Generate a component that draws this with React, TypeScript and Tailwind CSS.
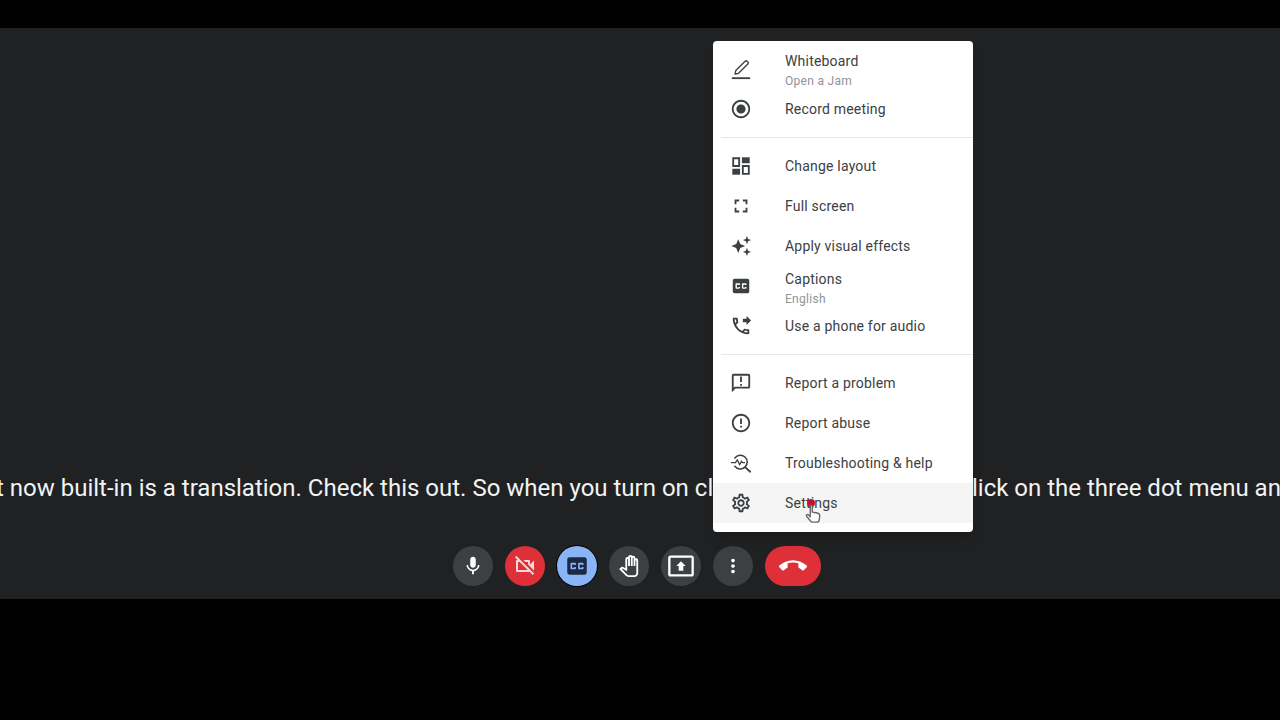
import React from "react";
import {
  MdRadioButtonChecked,
  MdFullscreen,
  MdClosedCaption,
  MdOutlinePhoneForwarded,
  MdOutlineAnnouncement,
  MdErrorOutline,
  MdOutlineSettings,
  MdMic,
  MdOutlineVideocamOff,
  MdOutlinePanTool,
  MdOutlinePresentToAll,
  MdMoreVert,
  MdCallEnd,
} from "react-icons/md";

function PencilIcon({ className }: any) {
  return (
    <svg viewBox="0 0 24 24" className={className} fill="none" stroke="currentColor" strokeWidth="1.5" strokeLinejoin="round">
      <path d="M5.5 17.500l.8-3.800L16.500 3.500c.6-.6 1.500-.6 2.100 0l.9.900c.6.600.6 1.500 0 2.100L9.300 16.700z" />
      <path d="M2 22h20" strokeWidth="2" />
    </svg>
  );
}

function LayoutIcon({ className }: any) {
  return (
    <svg viewBox="0 0 24 24" className={className} fill="currentColor">
      <path d="M2.500 2.500h8.500v10.500H2.500V2.500zm2 2V11H9V4.500H4.500z" />
      <path d="M13 2.500h8.500V9H13z" />
      <path d="M2.500 15H11v6.500H2.500z" />
      <path d="M13 11h8.500v10.500H13V11zm2 2v6.500h4.500V13H15z" />
    </svg>
  );
}

function SparkleIcon({ className }: any) {
  return (
    <svg viewBox="0 0 24 24" className={className} fill="currentColor">
      <path d="M9 4.500l2.200 5.300 5.300 2.200-5.300 2.200L9 19.500l-2.200-5.300L1.500 12l5.300-2.200z" />
      <path d="M18.500 1l1.200 3.300L23 5.500l-3.300 1.200L18.500 10l-1.200-3.300L14 5.500l3.300-1.200z" />
      <path d="M18.500 14l1.200 3.300L23 18.500l-3.300 1.200L18.500 23l-1.200-3.300L14 18.500l3.300-1.200z" />
    </svg>
  );
}

function TroubleshootIcon({ className }: any) {
  return (
    <svg viewBox="0 0 24 24" className={className} fill="none" stroke="currentColor" strokeWidth="1.700" strokeLinecap="round" strokeLinejoin="round">
      <path d="M5.300 6.500A7.500 7.500 0 1 1 5.300 15.500" />
      <path d="M16.500 16.500L22 21.500" strokeWidth="2" />
      <path d="M1.500 11.500H6l2-3 2.500 5.500 2-4 1 1.500h2.500" strokeWidth="1.400" />
    </svg>
  );
}

function MenuItem({ icon: Icon, label, sub, active, subTop }: any) {
  return (
    <div className={`h-10 flex ${sub ? "items-start" : "items-center"} ${active ? "bg-[#f5f5f5]" : ""}`}>
      <div className="w-14 mr-4 h-10 flex items-center justify-center shrink-0">
        <Icon className="w-[22px] h-[22px] text-[#3c4043]" />
      </div>
      <div className={sub ? subTop : ""}>
        <div className="text-[14px] leading-5 tracking-[0.2px] text-[#3c4043]">{label}</div>
        {sub && <div className="text-[12px] leading-[21px] tracking-[0.3px] text-[#8f9398]">{sub}</div>}
      </div>
    </div>
  );
}

function Divider() {
  return <div className="my-2 ml-2 h-px bg-[#e8e8e8]" />;
}

function ToolButton({ icon: Icon, bg, color, wide, size }: any) {
  return (
    <div className={`h-10 ${wide ? "w-14" : "w-10"} rounded-full flex items-center justify-center ${bg}`}>
      <Icon className={`${size || "w-[22px] h-[22px]"} ${color}`} />
    </div>
  );
}

export default function App() {
  return (
    <div className="h-[720px] w-[1280px] bg-black overflow-hidden flex flex-col font-['Roboto',sans-serif]">
      <div className="h-7 shrink-0" />

      <div className="relative h-[571px] shrink-0 bg-[#1f2123] overflow-hidden flex flex-col justify-end">
        {/* caption line runs past both edges of the window */}
        <div className="whitespace-nowrap text-[24px] leading-8 text-[#f1f3f4] mb-[42px] -ml-[4px]">
          t now built-in is a translation. Check this out. So when you turn on closed captions and you click on the three dot menu and
        </div>

        <div className="flex justify-center gap-3 mb-[13px] pr-[6px]">
          <ToolButton icon={MdMic} bg="bg-[#3c4043]" color="text-white" />
          <ToolButton icon={MdOutlineVideocamOff} bg="bg-[#de3038]" color="text-[#fbd5d7]" size="w-6 h-6" />
          <div className="w-10 h-10 rounded-full bg-[#8ab4f8] flex items-center justify-center ring-1 ring-black">
            <MdClosedCaption className="w-[26px] h-[26px] text-[#1b2a44]" />
          </div>
          <ToolButton icon={MdOutlinePanTool} bg="bg-[#3c4043]" color="text-white" />
          <ToolButton icon={MdOutlinePresentToAll} bg="bg-[#3c4043]" color="text-white" size="w-7 h-7" />
          <ToolButton icon={MdMoreVert} bg="bg-[#3c4043]" color="text-white" />
          <ToolButton icon={MdCallEnd} bg="bg-[#de3038]" color="text-white" wide size="w-7 h-7" />
        </div>

        <div className="absolute left-[713px] top-[13px] w-[260px] h-[491px] bg-white rounded pt-2 shadow-lg">
          <MenuItem icon={PencilIcon} label="Whiteboard" sub="Open a Jam" subTop="pt-[2px]" />
          <MenuItem icon={MdRadioButtonChecked} label="Record meeting" />
          <Divider />
          <MenuItem icon={LayoutIcon} label="Change layout" />
          <MenuItem icon={MdFullscreen} label="Full screen" />
          <MenuItem icon={SparkleIcon} label="Apply visual effects" />
          <MenuItem icon={MdClosedCaption} label="Captions" sub="English" subTop="pt-[3px]" />
          <MenuItem icon={MdOutlinePhoneForwarded} label="Use a phone for audio" />
          <Divider />
          <MenuItem icon={MdOutlineAnnouncement} label="Report a problem" />
          <MenuItem icon={MdErrorOutline} label="Report abuse" />
          <MenuItem icon={TroubleshootIcon} label="Troubleshooting & help" />
          <MenuItem icon={MdOutlineSettings} label="Settings" active />
        </div>

        {/* pointer with the red click marker */}
        <div className="absolute left-[807px] top-[471px] w-2 h-2 rounded-full bg-[#c8102e]" />
        <svg viewBox="0 0 24 24" className="absolute left-[802px] top-[473px] w-[22px] h-6" fill="#ffffffcc" stroke="#666" strokeWidth="1.500" strokeLinejoin="round">
          <path d="M9 3.500c1-.8 2.200 0 2.200 1.200V11l5.300 1c2 .4 3 1.500 2.800 3.500l-.5 4c-.2 1.500-1.300 2.500-2.800 2.500h-4c-1.500 0-2.400-.6-3.200-1.800L5 15.500c-.8-1.200.8-2.500 1.900-1.500L9 16V5z" />
        </svg>
      </div>
    </div>
  );
}
